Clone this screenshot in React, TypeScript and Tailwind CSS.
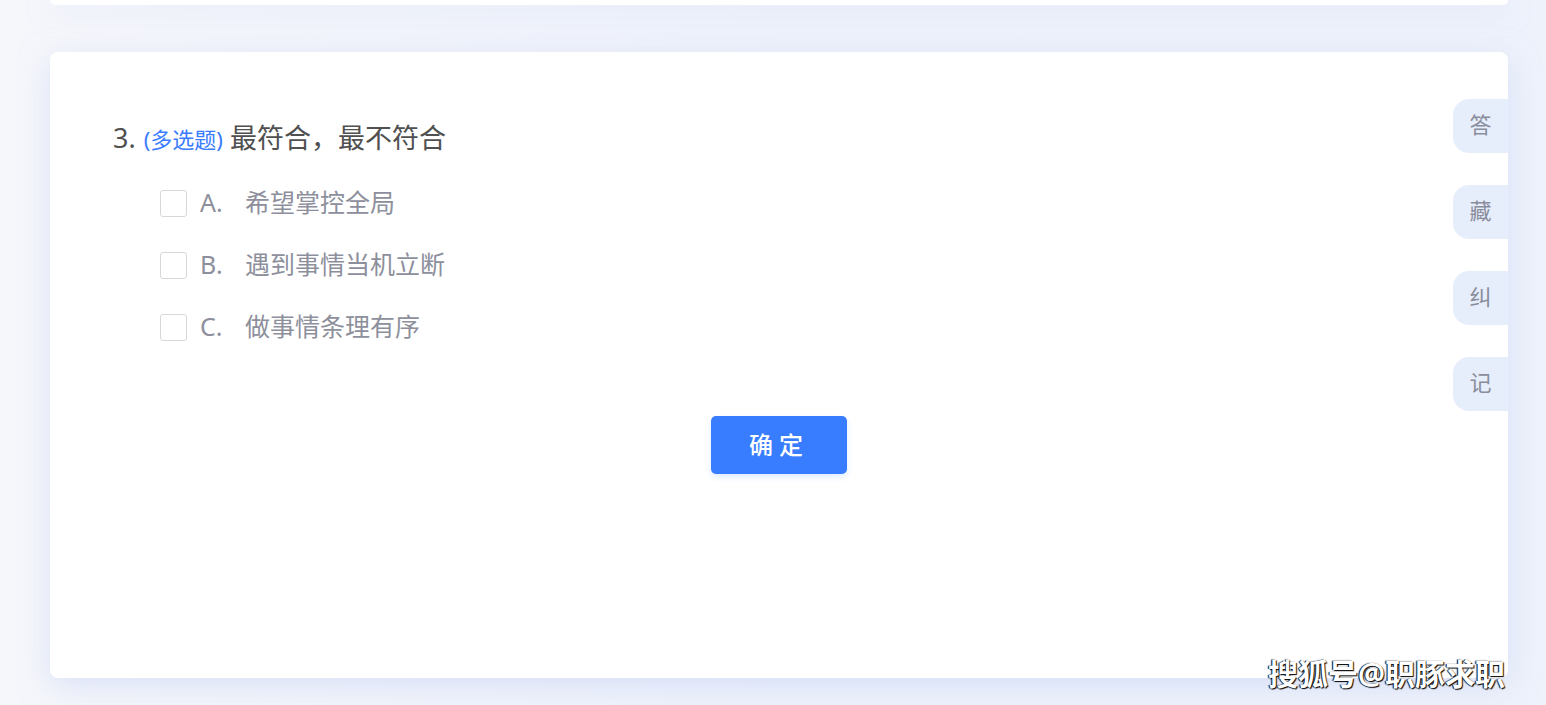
import React from "react";

const options = [
  { key: "A.", text: "希望掌控全局" },
  { key: "B.", text: "遇到事情当机立断" },
  { key: "C.", text: "做事情条理有序" },
];

const sideTabs = ["答", "藏", "纠", "记"];

export default function App() {
  return (
    <div
      className="relative h-[705px] w-[1546px] overflow-hidden bg-gradient-to-r from-[#f6f7fb] via-[#eef2fb] to-[#eef2fb]"
      style={{ fontFamily: '"Noto Sans", "Noto Sans CJK SC", sans-serif' }}
    >
      <div className="ml-[50px] mr-[38px] flex flex-col">
        {/* previous card, mostly scrolled off */}
        <div className="h-[5px] rounded-b-lg bg-white shadow-[0_6px_24px_rgba(200,212,245,0.6)]" />

        {/* question card */}
        <div className="relative mt-[47px] h-[626px] rounded-lg bg-white shadow-[0_8px_30px_rgba(200,212,245,0.6)]">
          <div className="pl-[63px] pt-[66px]">
            <div className="flex items-baseline text-[27px] text-[#505050]">
              <span>3.</span>
              <span className="ml-[8px] text-[22px] text-[#3b7cff]">(多选题)</span>
              <span className="ml-[7px]">最符合，最不符合</span>
            </div>

            <div className="ml-[47px] mt-[31px] flex flex-col gap-[35px]">
              {options.map((o) => (
                <div key={o.key} className="flex h-[27px] items-center text-[25px] text-[#8d909c]">
                  <span className="h-[27px] w-[27px] rounded-[3px] border border-[#d8d8d8] bg-white" />
                  <span className="ml-[13px] w-[45px]">{o.key}</span>
                  <span>{o.text}</span>
                </div>
              ))}
            </div>

            <div className="mt-[75px] flex justify-center pr-[63px]">
              <button className="h-[58px] w-[136px] rounded-[5px] bg-[#387dff] text-[24px] font-medium tracking-[6px] text-white shadow-[0_3px_6px_rgba(56,125,255,0.15)]">
                确定
              </button>
            </div>
          </div>

          {/* side tabs */}
          <div className="absolute right-0 top-[47px] flex flex-col gap-[32px]">
            {sideTabs.map((t) => (
              <div
                key={t}
                className="flex h-[54px] w-[55px] items-center justify-center rounded-l-[16px] bg-[#e6edfb] pb-[3px] text-[22px] text-[#8a8e9c]"
              >
                {t}
              </div>
            ))}
          </div>
        </div>
      </div>

      {/* watermark */}
      <div
        className="absolute left-[1268px] top-[651px] text-[30px] font-bold text-white"
        style={{ textShadow: "1px 1px 1px #000, -1px 0 1px #000" }}
      >
        搜狐号@职豚求职
      </div>
    </div>
  );
}
